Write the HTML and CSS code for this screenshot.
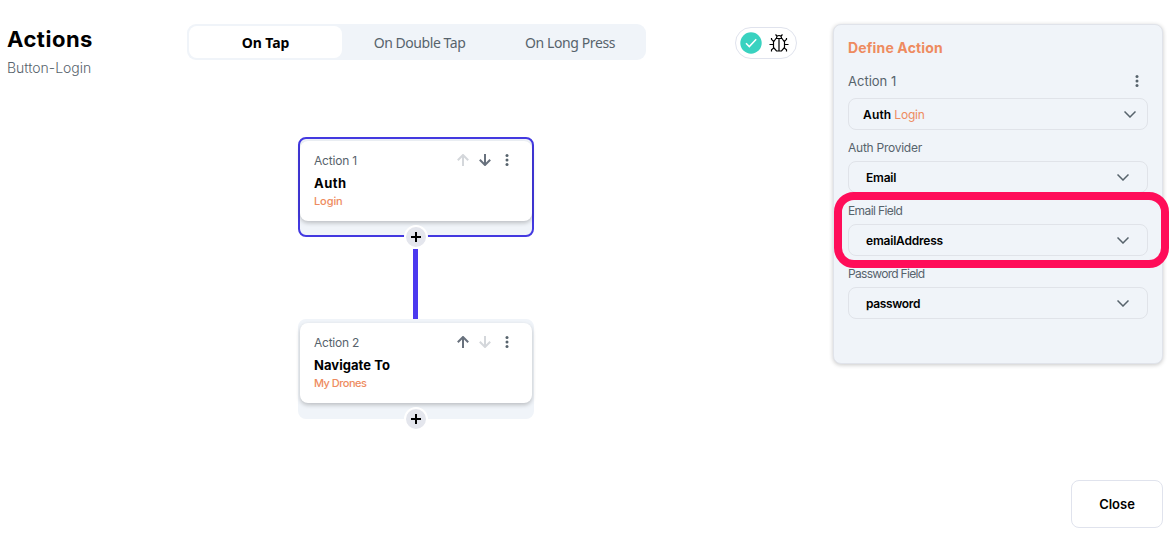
FILE: index.html
```html
<!DOCTYPE html>
<html lang="en">
<head>
<meta charset="utf-8">
<title>Actions</title>
<link rel="stylesheet" href="styles.css">
</head>
<body>
<svg class="defs" aria-hidden="true">
  <symbol id="up" viewBox="0 0 12 12"><path d="M6 12V1M.8 6.2 6 1l5.2 5.2"/></symbol>
  <symbol id="down" viewBox="0 0 12 12"><path d="M6 0v11M.8 5.8 6 11l5.2-5.2"/></symbol>
  <symbol id="dots" viewBox="0 0 4 12"><g fill="#57636c" stroke="none"><circle cx="2" cy="1.6" r="1.5"/><circle cx="2" cy="6" r="1.5"/><circle cx="2" cy="10.4" r="1.5"/></g></symbol>
  <symbol id="chevron" viewBox="0 0 12 7"><path d="m.5.5 5.500 5.500 5.500-5.500"/></symbol>
</svg>
<main class="page">
  <header class="heading">
    <h1 class="title">Actions</h1>
    <p class="subtitle">Button-Login</p>
  </header>
  <section class="workspace">
    <nav class="tabs">
      <button class="tab active">On Tap</button>
      <button class="tab t-double">On Double Tap</button>
      <button class="tab t-long">On Long Press</button>
    </nav>
    <div class="flow">
      <article class="node selected">
        <div class="card">
          <div class="card-head"><span class="card-label t-one">Action 1</span>
            <svg class="arrow faded"><use href="#up"/></svg><svg class="arrow"><use href="#down"/></svg><svg class="dots"><use href="#dots"/></svg></div>
          <h2 class="card-title t-auth">Auth</h2>
          <p class="card-detail">Login</p>
        </div>
        <button class="add" aria-label="Add action"><svg viewBox="0 0 10 10"><path d="M5 0v10M0 5h10"/></svg></button>
      </article>
      <div class="connector"></div>
      <article class="node">
        <div class="card">
          <div class="card-head"><span class="card-label t-two">Action 2</span>
            <svg class="arrow"><use href="#up"/></svg><svg class="arrow faded"><use href="#down"/></svg><svg class="dots"><use href="#dots"/></svg></div>
          <h2 class="card-title">Navigate To</h2>
          <p class="card-detail t-drones">My Drones</p>
        </div>
        <button class="add" aria-label="Add action"><svg viewBox="0 0 10 10"><path d="M5 0v10M0 5h10"/></svg></button>
      </article>
    </div>
  </section>
  <div class="status">
    <svg class="check" viewBox="0 0 22 22"><circle cx="11" cy="11" r="10.700"/><path d="m6 11.300 3.300 3.300 6.900-7.400"/></svg>
    <svg class="bug" viewBox="0 0 20 20"><path d="M7.500 5a2.500 2.500 0 0 1 5 0M8 3 6.500 1.500M12 3l1.500-1.500M7 5.500h6L15.500 9v5.500L12.500 18h-5l-3-3.500V9zM10 5.500V18M4.700 8.500 2.500 6.300V5M15.300 8.500l2.200-2.200V5M4.500 11.500H.5M15.500 11.500h4M4.700 15 2.500 16.700v1.800M15.300 15l2.200 1.700v1.800"/></svg>
  </div>
  <aside class="side">
    <section class="panel">
      <h2 class="panel-title">Define Action</h2>
      <div class="panel-row"><span>Action 1</span><svg class="dots"><use href="#dots"/></svg></div>
      <div class="select main-select"><span class="value"><span class="t-authvalue">Auth</span> <span class="accent">Login</span></span><svg class="chevron"><use href="#chevron"/></svg></div>
      <div class="label t-provider">Auth Provider</div>
      <div class="select"><span class="value t-email">Email</span><svg class="chevron"><use href="#chevron"/></svg></div>
      <div class="label t-emailfield">Email Field</div>
      <div class="select"><span class="value t-address">emailAddress</span><svg class="chevron"><use href="#chevron"/></svg></div>
      <div class="label t-passfield">Password Field</div>
      <div class="select"><span class="value t-password">password</span><svg class="chevron"><use href="#chevron"/></svg></div>
      <div class="highlight"></div>
    </section>
    <button class="close">Close</button>
  </aside>
</main>
</body>
</html>
```
FILE: styles.css
```css
* { box-sizing: border-box; }
body { margin: 0; background: #fff; font-family: Inter, "Liberation Sans", sans-serif; color: #000; }
h1, h2, p { margin: 0; }
button { font: inherit; color: inherit; padding: 0; }
svg { display: block; fill: none; flex: none; }
.defs { position: absolute; width: 0; height: 0; }
.page { width: 1176px; height: 536px; overflow: hidden; display: grid; grid-template-columns: 179px 459px 62px 330px; padding: 24px 13px 8px 7px; align-items: start; }
.heading { padding-top: 1px; }
.title { font-size: 22px; line-height: 28px; font-weight: 700; letter-spacing: .5px; }
.subtitle { margin-top: 6px; font-size: 14px; line-height: 18px; color: #57636c; font-weight: 300; }
.workspace { width: 459px; margin-left: 1px; }
.tabs { height: 36px; border-radius: 9px; background: #f0f4f9; padding: 2px; display: grid; grid-template-columns: 153px 155px 146px; }
.tab { height: 32px; border: 0; background: none; border-radius: 8px; padding-top: 2px; font: 14px/30px "Noto Sans", sans-serif; color: #57636c; white-space: nowrap; }
.tab.active { background: #fff; color: #000; font-weight: 700; letter-spacing: -.1px; }
.t-double { letter-spacing: -.45px; }
.t-long { letter-spacing: -.4px; }
.flow { padding: 77px 0 0 111px; }
.node { position: relative; width: 236px; height: 100px; border: 2px solid #f0f4f9; border-radius: 8px; background: #f0f4f9; padding-top: 2px; }
.selected { border-color: #4339e0; }
.card { height: 80px; border-radius: 8px; background: #fff; padding: 10px 14px; box-shadow: 0 2px 4px rgba(0,0,0,.22); }
.card-head { display: flex; align-items: center; height: 19px; color: #57636c; font-size: 12px; }
.card-label { flex: 1; }
.t-one { letter-spacing: -.2px; }
.t-two { letter-spacing: -.25px; }
.arrow { width: 12px; height: 12px; margin: -1px 10px 0 0; stroke: #68717d; stroke-width: 2; }
.faded { stroke: #d4d7db; }
.dots { width: 4px; height: 12px; }
.card .dots { margin: -1px 9px 0 4px; }
.card-title { font-size: 13px; font-weight: 700; line-height: 18px; margin-top: 4px; letter-spacing: .05px; }
.t-auth { letter-spacing: .5px; }
.card-detail { color: #ee8b60; font-size: 11px; font-weight: 500; line-height: 16px; margin-top: 1px; letter-spacing: -.1px; }
.t-drones { letter-spacing: -.5px; }
.add { position: absolute; left: 104px; bottom: -14px; width: 24px; height: 24px; border: 2px solid #fff; border-radius: 50%; background: #e4e6ed; display: grid; place-items: center; }
.add svg { width: 10px; height: 10px; stroke: #000; stroke-width: 2; }
.connector { width: 5px; height: 70px; margin: 12px 0 0 115px; background: #4b39ef; }
.status { width: 62px; height: 32px; margin: 3px 0 0 90px; border: 1px solid #e0e3ed; border-radius: 16px; display: flex; align-items: center; gap: 6px; padding-left: 4px; }
.check { width: 22px; height: 22px; margin-left: -.5px; }
.check circle { fill: #39d2c0; }
.check path { stroke: #fff; stroke-width: 1.5; }
.bug { width: 20px; height: 20px; margin-left: 1.500px; stroke: #000; stroke-width: 1.2; }
.side { margin-left: 126px; width: 330px; display: flex; flex-direction: column; align-items: flex-end; }
.panel { position: relative; width: 330px; height: 340px; background: #f0f4f9; border: 1px solid #e0e3ea; border-radius: 8px; padding: 13px 15px 0 14px; box-shadow: 0 1px 4px rgba(0,0,0,.22); }
.panel-title { color: #ee8b60; font-size: 14px; line-height: 20px; font-weight: 700; letter-spacing: .15px; }
.panel-row { display: flex; align-items: center; justify-content: space-between; height: 18px; margin-top: 14px; color: #57636c; font-size: 13px; padding-right: 8px; }
.select { width: 300px; height: 32px; border: 1px solid #e0e3e9; border-radius: 8px; padding: 0 18px 0 17px; display: flex; align-items: center; justify-content: space-between; font-size: 12px; font-weight: 600; }
.main-select { margin-top: 8px; padding: 0 11px 0 14px; }
.t-authvalue { letter-spacing: .15px; }
.accent { color: #ee8b60; font-weight: 400; letter-spacing: -.2px; }
.chevron { width: 12px; height: 7px; stroke: #57636c; stroke-width: 1.5; }
.label { height: 31px; padding: 9px 0 4px; font-size: 12px; line-height: 18px; color: #57636c; }
.t-provider { letter-spacing: -.25px; }
.t-emailfield { letter-spacing: -.6px; }
.t-passfield { letter-spacing: -.7px; }
.t-email { letter-spacing: -.2px; }
.t-address { letter-spacing: -.2px; }
.t-password { letter-spacing: -.35px; }
.highlight { position: absolute; left: 0; top: 167px; width: 335px; height: 76px; border: 8px solid #ff0d59; border-radius: 20px; }
.close { width: 92px; height: 48px; margin-top: 116px; border: 1px solid #e0e3ed; border-radius: 8px; background: #fff; font-size: 13px; font-weight: 600; }
```
